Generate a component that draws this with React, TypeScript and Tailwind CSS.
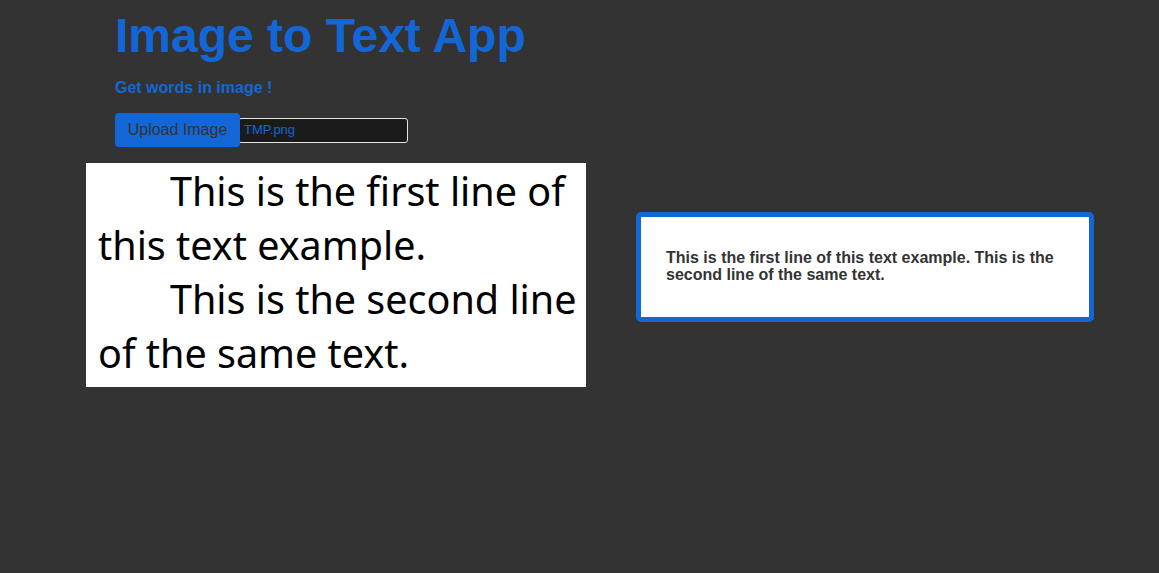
import React from "react";

export default function App() {
  return (
    <div className="min-h-[573px] w-full bg-[#333333] font-['Liberation_Sans',Arial,sans-serif]">
      <div className="pl-[115px] pt-[8px]">
        <h1 className="text-[48px] font-bold leading-[55px] text-[#1366d6]">Image to Text App</h1>
        <h3 className="mt-[16px] text-[16px] font-bold leading-[18px] text-[#1366d6]">Get words in image !</h3>
        <div className="mt-[16px] flex items-center">
          <div className="relative z-10 flex h-[34px] w-[125px] items-center justify-center rounded-[4px] bg-[#1366d6] text-[16px] text-[#333333]">
            Upload Image
          </div>
          <div className="-ml-[2px] flex h-[25px] w-[170px] items-center rounded-[3px] border border-[#e5e5e5] bg-[#1b1b1b] pl-[5px] text-[13px] text-[#1366d6]">
            TMP.png
          </div>
        </div>
      </div>
      <div className="mt-[16px] flex items-start pl-[86px]">
        <div className="h-[224px] w-[500px] bg-white pl-[12px] pr-[4px] pt-[1px] font-['Noto_Sans','Open_Sans',sans-serif] text-[39.5px] leading-[54px] text-black">
          <p className="indent-[72px]">This is the first line of this text example.</p>
          <p className="indent-[72px]">This is the second line of the same text.</p>
        </div>
        <div className="ml-[50px] mt-[49px] w-[458px] rounded-[5px] border-[5px] border-[#1366d6] bg-white px-[25px] pt-[32px] pb-[34px] text-[16px] font-bold leading-[17px] text-[#333333]">
          This is the first line of this text example. This is the second line of the same text.
        </div>
      </div>
    </div>
  );
}
